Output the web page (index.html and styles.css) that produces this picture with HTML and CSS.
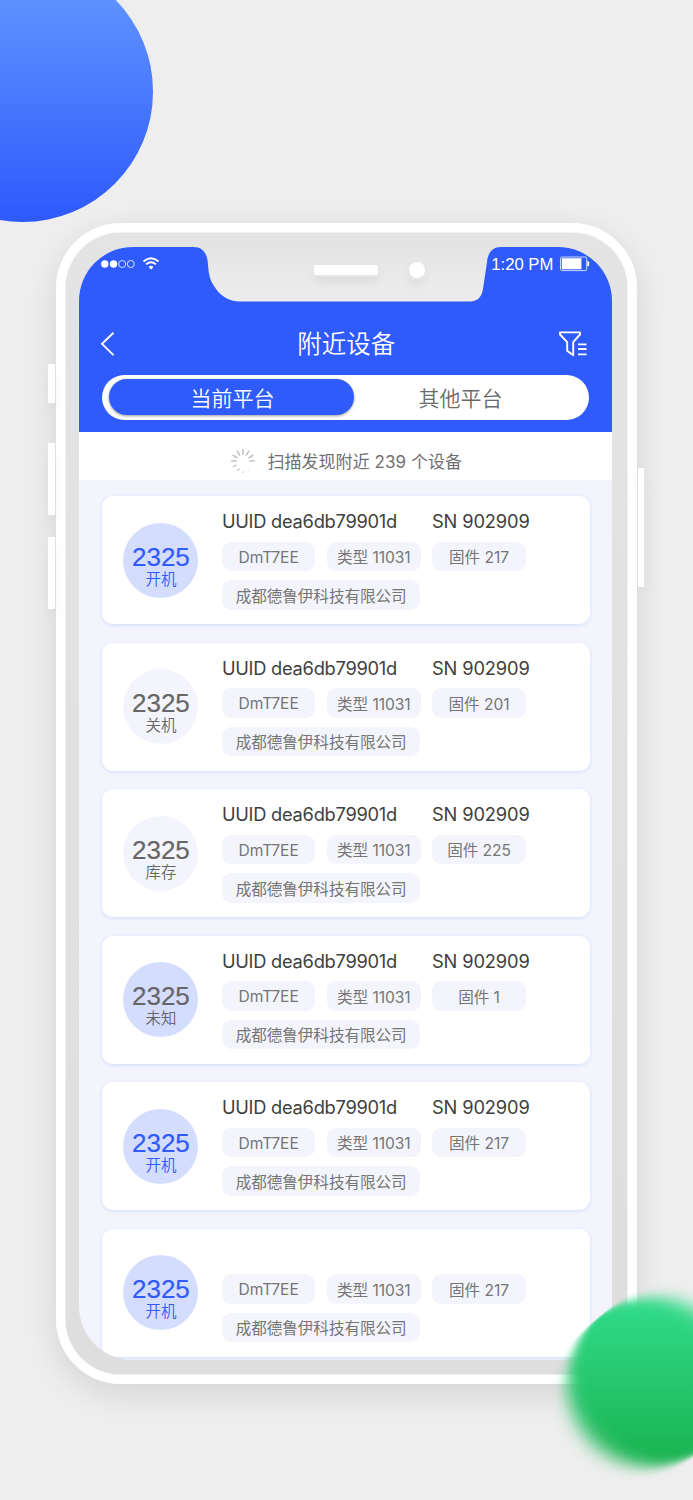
FILE: index.html
```
<!DOCTYPE html>
<html lang="zh-CN">
<head>
<meta charset="utf-8">
<title>附近设备</title>
<link rel="stylesheet" href="styles.css">
</head>
<body>
<main class="stage">
  <div class="orb-blue"></div>
  <i class="key key-mute"></i><i class="key key-up"></i><i class="key key-down"></i><i class="key key-power"></i>
  <div class="phone">
    <div class="screen">
      <svg class="notch" width="320" height="56" viewBox="0 0 320 56">
        <defs><linearGradient id="ng" x2="0" y2="1"><stop offset="0" stop-color="#e3e3e3"/><stop offset=".5" stop-color="#eaeaea"/><stop offset="1" stop-color="#ebebeb"/></linearGradient></defs>
        <path d="M3 -1V0C12 0 16 5 17.5 13C18.7 22 18 30 24 39C30 49 39 54.5 50 54.5H280C288 54.5 292 49 293 42L297 15C298 5 303 0 311 0V-1Z" fill="url(#ng)"/>
      </svg>
      <i class="speaker"></i><i class="camera"></i>
      <header class="header">
        <div class="status">
          <svg width="60" height="16" viewBox="0 0 60 16" fill="none" stroke="#fff">
            <g stroke="none" fill="#fff"><circle cx="3.8" cy="8" r="3.7"/><circle cx="12.6" cy="8" r="3.7"/></g>
            <g stroke-width=".8"><circle cx="21.2" cy="8" r="3.5"/><circle cx="29.8" cy="8" r="3.5"/></g>
            <path d="M42.4 5.5Q50 -1.2 57.6 5.5M45.1 8.4Q50 4 54.9 8.4" stroke-width="1.9"/>
            <path d="M47.6 11Q50 8.6 52.4 11L50 13.6Z" fill="#fff" stroke="none"/>
          </svg>
          <div class="status-right"><span class="clock">1:20 PM</span>
          <svg width="30" height="16" viewBox="0 0 30 16"><rect x=".5" y="1" width="26.2" height="13.6" rx="1.5" fill="none" stroke="#fff" stroke-width=".9" opacity=".85"/><path d="M1.8 2.3H21.4V13.3H1.8Z M27.3 5.3H28.2Q29.2 5.4 29.2 6.5V9.2Q29.2 10.2 28.2 10.3H27.3Z" fill="#fff"/></svg></div>
        </div>
        <div class="nav">
          <svg width="16" height="26" viewBox="0 0 16 26"><path d="M13.5 1.7L2 12.8L13.5 24.2" fill="none" stroke="#fff" stroke-width="1.9"/></svg>
          <h1 class="title">附近设备</h1>
          <svg width="30" height="28" viewBox="0 0 30 28" fill="none" stroke="#fff" stroke-width="1.9" stroke-linejoin="round"><path d="M2 2.4H22V4.5L15.2 12.2V25.3L9.2 20.8V12.2L2 4.5Z"/><path d="M20 14.4H28.5M20 19H28.5M20 24.4H28.5" stroke-width="1.8"/></svg>
        </div>
        <div class="tabs"><span class="tab active">当前平台</span><span class="tab">其他平台</span></div>
      </header>
      <div class="scan">
        <svg width="26" height="26" viewBox="0 0 26 26" stroke="#c4c4c4" stroke-width="1.6" stroke-linecap="round">
          <path d="M13 1.6V6.4M18.7 3.2L16.4 7.1M23 7.3L19 9.7M19.8 13H24.3M6.2 13H1.7M7 9.7L3 7.3M9.6 7.1L7.3 3.2"/>
          <path d="M6.2 17L3.5 18.6M9 20.9L8 22.5M13 23.9V24.2" stroke-width="1.4"/><path d="M18.6 22.7L18.7 22.8" stroke-width="1"/>
        </svg>
        <span class="scan-text">扫描发现附近 239 个设备</span>
      </div>
      <div class="list" id="list"></div>
    </div>
  </div>
  <svg class="orb-green" width="300" height="300" viewBox="0 0 300 300">
    <defs>
      <linearGradient id="gg" gradientUnits="userSpaceOnUse" x1="0" y1="66" x2="0" y2="234" gradientTransform="rotate(40 150 150)"><stop stop-color="#31dc8b"/><stop offset="1" stop-color="#19b24f"/></linearGradient>
      <filter id="blur" filterUnits="userSpaceOnUse" x="0" y="0" width="300" height="300" color-interpolation-filters="sRGB"><feGaussianBlur stdDeviation="10 0"/></filter>
    </defs>
    <circle cx="150" cy="150" r="84" fill="url(#gg)" filter="url(#blur)"/>
  </svg>
</main>
<script src="app.js"></script>
</body>
</html>
```
FILE: styles.css
```
* { box-sizing: border-box; }
body { margin: 0; background: #eee; font-family: Inter, "Noto Sans CJK SC", sans-serif; }
.stage { position: relative; width: 693px; height: 1500px; padding: 223px 0 0 56px; overflow: hidden; background: #eee; }
.orb-blue { position: absolute; left: -108px; top: -39px; width: 260.5px; height: 260.5px; border-radius: 50%; background: linear-gradient(#6095ff 10%, #2f5afc 98%); }
.orb-green { position: absolute; left: 502px; top: 1232px; transform: rotate(-40deg); }
.key { position: absolute; z-index: 1; width: 7px; background: #fff; border-radius: 1px; box-shadow: 0 8px 16px rgba(0,0,0,.05); }
.key-mute { left: 48px; top: 364px; height: 39px; }
.key-up { left: 48px; top: 443px; height: 72px; }
.key-down { left: 48px; top: 537px; height: 72px; }
.key-power { left: 638px; top: 468px; width: 6px; height: 119px; }
.phone { position: relative; width: 580.5px; height: 1161px; padding: 15px 14px 14px 14.4px; border: 9px solid #fff; border-radius: 65px; background: linear-gradient(#e4e4e4, #dedede); box-shadow: inset 0 0 0 .5px #fff, 0 10px 32px rgba(0,0,0,.11); }
.screen { position: relative; width: 533px; height: 1113px; border-radius: 54px; overflow: hidden; background: #f4f5fc; }
.notch { position: absolute; left: 111px; top: 0; }
.speaker { position: absolute; left: 235px; top: 18px; width: 64px; height: 10px; border-radius: 2px; background: #fff; box-shadow: 0 0 0 2px #e6e6e6, 0 6px 10px rgba(0,0,0,.08); }
.camera { position: absolute; left: 329.5px; top: 15px; width: 16px; height: 16px; border-radius: 50%; background: #fff; box-shadow: 0 0 0 3px #e6e6e6, 0 6px 10px rgba(0,0,0,.08); }
.header { height: 185px; padding: 9px 23px 0; background: #305bfc; color: #fff; }
.status { display: flex; justify-content: space-between; align-items: center; height: 16px; margin: 0 -1px; }
.status-right { display: flex; align-items: center; gap: 7px; }
.clock { padding-top: 1px; font: 16.7px/17px "Liberation Sans", sans-serif; white-space: nowrap; }
.nav { display: flex; align-items: center; justify-content: space-between; height: 50px; margin: 46.5px 1px 0 -2px; }
.title { margin: 1px 0 0 17.5px; font-size: 24.5px; font-weight: 350; line-height: 36px; }
.tabs { display: flex; height: 45px; margin-top: 6.5px; padding: 4.2px 7px; border-radius: 23px; background: #fff; }
.tab { flex: 0 0 212px; display: flex; align-items: center; justify-content: center; height: 36px; padding-bottom: 1px; color: #6a6a6a; font-size: 21px; font-weight: 350; }
.tab.active { flex-basis: 245px; padding-left: 1px; color: #fff; background: #305bfc; border-radius: 18px; box-shadow: 0 1px 3px rgba(0,0,0,.4); }
.scan { display: flex; align-items: center; gap: 10px; height: 48px; padding: 10px 0 0 151px; background: #fff; color: #707070; font-size: 17px; font-weight: 400; letter-spacing: .05px; }
.scan-text { padding: 0 0 1px 1px; white-space: nowrap; }
.list { display: flex; flex-direction: column; gap: 18.5px; padding: 16.3px 22.5px 0; }
.card { display: flex; flex: none; gap: 23.5px; height: 128px; padding: 14px 21px 0 21.5px; border-radius: 11px; background: #fff; box-shadow: 0 1px 4px rgba(60,100,255,.18); }
.badge { display: flex; flex-direction: column; align-items: center; width: 75px; height: 75px; margin-top: 12.5px; padding-top: 20px; border-radius: 50%; background: #f4f5fc; color: #666; }
.badge.on, .badge.unknown { background: #d5ddff; }
.badge.on { color: #305bfc; }
.badge b { font: 400 26px/28px "Liberation Sans", sans-serif; -webkit-text-stroke: .2px; }
.badge span { font-size: 15.5px; line-height: 17px; font-weight: 350; }
.info { width: 320px; }
.ids { display: flex; height: 23px; color: #404040; font-size: 18.3px; font-weight: 400; line-height: 22px; white-space: nowrap; }
.uuid { width: 210px; letter-spacing: -.26px; }
.sn { letter-spacing: -.12px; }
.tags { display: flex; flex-wrap: wrap; gap: 9px 11.7px; margin-top: 8.5px; }
.tag { display: flex; align-items: center; justify-content: center; width: 93.5px; height: 29.5px; padding-bottom: 1px; border-radius: 9px; background: #f4f5fc; color: #757575; font-size: 15.6px; font-weight: 400; letter-spacing: -.05px; white-space: nowrap; }
.model { padding: 1px 0 0; letter-spacing: 0; }
.company { width: 198.5px; }
```
FILE: app.js
```
const devices = [
  ['开机', 'on', '固件 217'],
  ['关机', 'off', '固件 201'],
  ['库存', 'off', '固件 225'],
  ['未知', 'unknown', '固件 1'],
  ['开机', 'on', '固件 217'],
  ['开机', 'on', '固件 217', true]
];
document.getElementById('list').innerHTML = devices.map(([state, kind, firmware, bare]) => `
  <article class="card">
    <div class="badge ${kind}"><b>2325</b><span>${state}</span></div>
    <div class="info">
      <div class="ids">${bare ? '' : '<span class="uuid">UUID dea6db79901d</span><span class="sn">SN 902909</span>'}</div>
      <div class="tags">
        <span class="tag model">DmT7EE</span><span class="tag type">类型 11031</span><span class="tag">${firmware}</span>
        <span class="tag company">成都德鲁伊科技有限公司</span>
      </div>
    </div>
  </article>`).join('');
```
